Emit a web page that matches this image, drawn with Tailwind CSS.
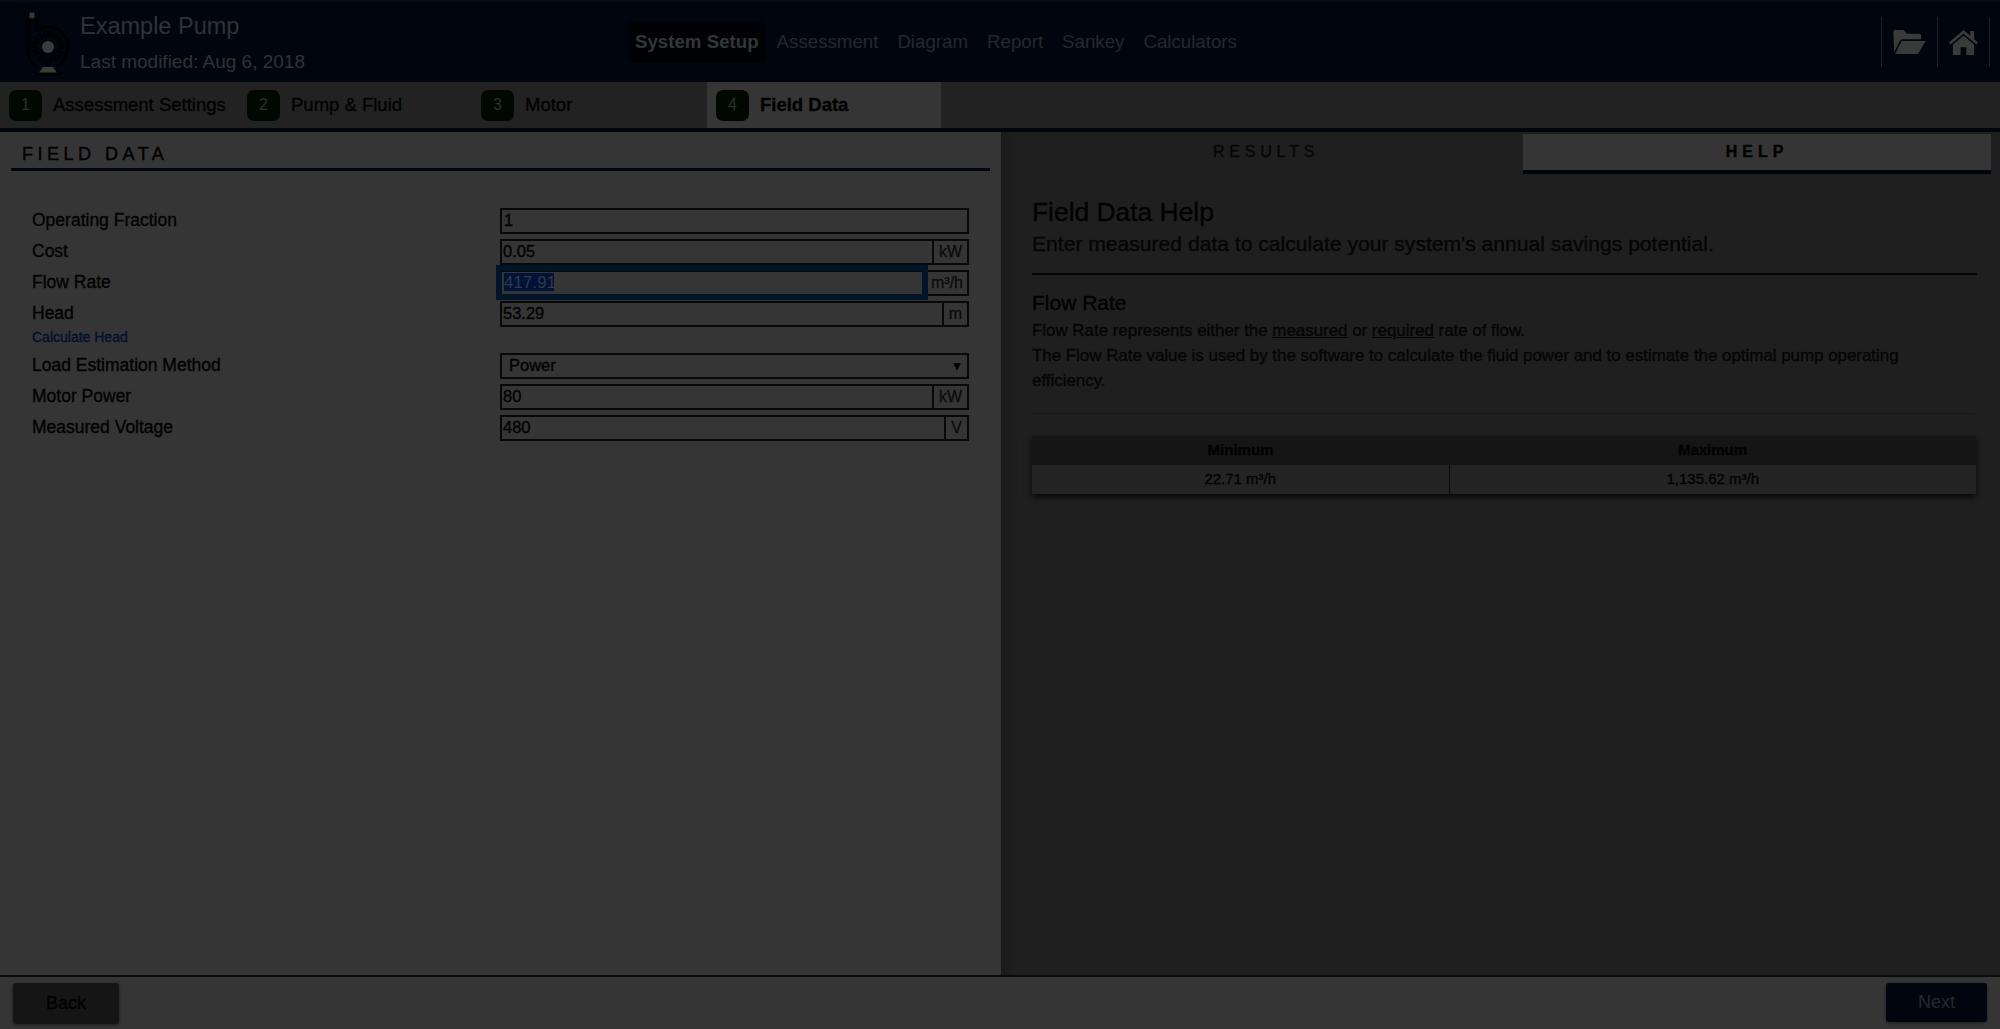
<!DOCTYPE html>
<html lang="en">
<head>
<meta charset="UTF-8">
<title>Example Pump</title>
<script src="https://cdn.jsdelivr.net/npm/@tailwindcss/browser@4"></script>
</head>
<body class="h-[1029px] w-[2000px] overflow-hidden bg-[#353535] font-['Liberation_Sans',sans-serif] text-[#020202] [-webkit-text-stroke:0.35px]">
  <!-- top nav -->
  <header class="flex h-[82px] items-center border-t-2 border-[#040c16] bg-[#01060e] [-webkit-text-stroke:0]">
    <div class="flex w-[628px] items-center">
      <svg class="ml-[20px] h-[72px] w-[50px] shrink-0" viewBox="20 4 50 72" fill="none">
        <path d="M29 10h6v7h-6z" fill="#383838" stroke="#000" stroke-width="1"/>
        <path d="M25 18h14" stroke="#000" stroke-width="3"/>
        <path d="M28 20v28c0 8 4 15 10 18M37 20v8c3-2 7-3 11-3 11 0 20 9 20 20 0 8-5 16-12 19" stroke="#000" stroke-width="2.500"/>
        <circle cx="48" cy="45" r="13" stroke="#000" stroke-width="6" stroke-dasharray="2 2"/>
        <circle cx="48" cy="45" r="6" fill="#3c3c3c"/>
        <path d="M43 65h10l4 6H39z" fill="#3c3c3c"/>
        <path d="M35 72h27" stroke="#000" stroke-width="3"/>
      </svg>
      <div class="ml-[10px]">
        <div class="text-[23.500px] leading-[26px] text-[#2f3236]">Example Pump</div>
        <div class="mt-[12px] text-[19px] leading-[21px] text-[#2f3236]">Last modified: Aug 6, 2018</div>
      </div>
    </div>
    <nav class="flex items-center text-[18.700px] text-[#24282d]">
      <span class="rounded-[5px] bg-[#000205] px-[7px] py-[9px] leading-[24px] font-bold text-[#353535]">System Setup</span>
      <span class="ml-[11px]">Assessment</span>
      <span class="ml-[19px]">Diagram</span>
      <span class="ml-[19px]">Report</span>
      <span class="ml-[19px]">Sankey</span>
      <span class="ml-[19px]">Calculators</span>
    </nav>
    <div class="ml-auto mr-[10px] flex h-[50px] items-center">
      <div class="flex h-full w-[56px] items-center justify-center border-l border-[#1e2226]">
        <svg class="h-[26px] w-[34px]" viewBox="0 0 36 28" fill="#3a3a3a"><path d="M0 3a2 2 0 0 1 2-2h9l4 4h13a2 2 0 0 1 2 2v4H10a3 3 0 0 0-3 2L1 25z"/><path d="M9 13h26l-8 13a3 3 0 0 1-2 1H2z"/></svg>
      </div>
      <div class="flex h-full w-[53px] items-center justify-center border-x border-[#1e2226]">
        <svg class="h-[25px] w-[29px]" viewBox="0 0 30 26" fill="#3a3a3a"><path d="M15 0 0 13l1.500 2L15 4l13.500 11 1.500-2-4-3.500V1h-4v5z"/><path d="M15 6 4 15v11h8v-8h6v8h8V15z"/></svg>
      </div>
    </div>
  </header>

  <!-- steps -->
  <div class="flex h-[46px] bg-[#222222] text-[18.500px]">
    <div class="flex w-[247px] items-center pl-[9px]"><span class="flex h-[31px] w-[33px] items-center justify-center rounded-[7px] bg-[#000801] text-[16px] text-[#2c302c] [-webkit-text-stroke:0]">1</span><span class="ml-[11px]">Assessment Settings</span></div>
    <div class="flex w-[234px] items-center"><span class="flex h-[31px] w-[33px] items-center justify-center rounded-[7px] bg-[#000801] text-[16px] text-[#2c302c] [-webkit-text-stroke:0]">2</span><span class="ml-[11px]">Pump &amp; Fluid</span></div>
    <div class="flex w-[226px] items-center"><span class="flex h-[31px] w-[33px] items-center justify-center rounded-[7px] bg-[#000801] text-[16px] text-[#2c302c] [-webkit-text-stroke:0]">3</span><span class="ml-[11px]">Motor</span></div>
    <div class="flex w-[234px] items-center bg-[#353535] pl-[9px] font-bold"><span class="flex h-[31px] w-[33px] items-center justify-center rounded-[7px] bg-[#000801] text-[16px] font-normal text-[#2c302c] [-webkit-text-stroke:0]">4</span><span class="ml-[11px]">Field Data</span></div>
  </div>
  <div class="h-[4px] bg-[#01060e] shadow-[0_2px_3px_rgba(0,0,0,0.4)]"></div>

  <main class="flex h-[843px]">
    <!-- left form -->
    <section class="w-[1001px] bg-[#353535] px-[11px]">
      <h2 class="h-[39px] border-b-[3px] border-[#01060e] pt-[12px] pl-[11px] text-[18px] leading-[21px] tracking-[4.500px] text-black">FIELD DATA</h2>
      <div class="mt-[37px] grid grid-cols-[468px_469px] pl-[21px] text-[17.500px]">
        <div class="flex h-[26px] items-center pb-[1px]">Operating Fraction</div>
        <div class="flex h-[26px] border-2 border-[#080808] pl-[2px] text-[16.500px] leading-[20px]">1</div>

        <div class="mt-[5px] flex h-[26px] items-center pb-[1px]">Cost</div>
        <div class="mt-[5px] flex h-[26px] border-2 border-[#080808] text-[16.500px] leading-[20px]"><span class="flex-1 pl-[1px]">0.05</span><span class="w-[35px] border-l-2 border-[#080808] text-center text-[16px] leading-[22px] text-[#0c0c0c]">kW</span></div>

        <div class="mt-[5px] flex h-[26px] items-center pb-[1px]">Flow Rate</div>
        <div class="relative mt-[5px] flex h-[26px] border-2 border-[#080808] text-[16.500px] leading-[20px]"><span class="flex-1"></span><span class="w-[42px] border-l-2 border-[#080808] text-center text-[16px] leading-[22px] whitespace-nowrap text-[#0c0c0c]">m³/h</span>
          <div class="absolute top-[-7px] left-[-6px] h-[35px] w-[432px] border-[6px] border-[#011428]"><span class="mt-[2px] ml-[2px] block w-[50px] bg-[#011238] text-[16.500px] leading-[18px] tracking-[0.3px] whitespace-nowrap text-[#2f3a48] [-webkit-text-stroke:0]">417.91</span></div>
        </div>

        <div class="mt-[5px] flex h-[26px] items-center pb-[1px]">Head</div>
        <div class="mt-[5px] flex h-[26px] border-2 border-[#080808] text-[16.500px] leading-[20px]"><span class="flex-1 pl-[1px]">53.29</span><span class="w-[25px] border-l-2 border-[#080808] text-center text-[16px] leading-[22px] text-[#0c0c0c]">m</span></div>

        <div class="col-span-2 h-[26px] pt-[1px] text-[14px] leading-[18px] text-[#011030]">Calculate Head</div>

        <div class="flex h-[26px] items-center pb-[1px]">Load Estimation Method</div>
        <div class="flex h-[26px] items-center justify-between border-2 border-[#080808] pr-[4px] pb-[1px] pl-[7px] text-[16.500px]"><span>Power</span><span class="text-[12px]">▼</span></div>

        <div class="mt-[5px] flex h-[26px] items-center pb-[1px]">Motor Power</div>
        <div class="mt-[5px] flex h-[26px] border-2 border-[#080808] text-[16.500px] leading-[20px]"><span class="flex-1 pl-[1px]">80</span><span class="w-[35px] border-l-2 border-[#080808] text-center text-[16px] leading-[22px] text-[#0c0c0c]">kW</span></div>

        <div class="mt-[5px] flex h-[26px] items-center pb-[1px]">Measured Voltage</div>
        <div class="mt-[5px] flex h-[26px] border-2 border-[#080808] text-[16.500px] leading-[20px]"><span class="flex-1 pl-[1px]">480</span><span class="w-[23px] border-l-2 border-[#080808] text-center text-[16px] leading-[22px] text-[#0c0c0c]">V</span></div>
      </div>
    </section>

    <!-- right help -->
    <section class="flex-1 bg-[#1f1f1f] shadow-[inset_14px_0_12px_-8px_rgba(0,0,0,0.2)]">
      <div class="flex h-[42px] pt-[2px]">
        <div class="flex h-[40px] w-[522px] items-center justify-center pb-[4px] pl-[8px] text-[16px] tracking-[4.800px] text-[#060606]">RESULTS</div>
        <div class="flex h-[40px] w-[468px] items-center justify-center border-b-[4px] border-[#01060e] bg-[#353535] text-[16px] font-bold tracking-[5px]">HELP</div>
      </div>
      <div class="pr-[23px] pl-[31px]">
        <h3 class="mt-[22px] text-[26.400px] leading-[32px]">Field Data Help</h3>
        <p class="text-[21.100px] leading-[32px] text-[#050505]">Enter measured data to calculate your system's annual savings potential.</p>
        <div class="mt-[13px] border-t-2 border-[#050505]"></div>
        <h4 class="mt-[15px] text-[21px] leading-[26px]">Flow Rate</h4>
        <p class="mt-[2px] text-[16.900px] leading-[25px] text-[#050505]">Flow Rate represents either the <u>measured</u> or <u>required</u> rate of flow.<br>The Flow Rate value is used by the software to calculate the fluid power and to estimate the optimal pump operating<br>efficiency.</p>
        <div class="mt-[20px] mr-[2px] border-t border-[#181818]"></div>
        <table class="mt-[22px] w-[944px] table-fixed text-center text-[15px] shadow-[0_3px_6px_rgba(0,0,0,0.8)]">
          <tr class="h-[29px] bg-[#151515] font-bold"><th class="w-[417px]">Minimum</th><th>Maximum</th></tr>
          <tr class="h-[29px] bg-[#242424]"><td class="border-r border-[#0a0a0a]">22.71 m³/h</td><td>1,135.62 m³/h</td></tr>
        </table>
      </div>
    </section>
  </main>

  <!-- footer -->
  <footer class="flex h-[54px] items-start justify-between border-t-2 border-[#0a0a0a] bg-[#353535] px-[13px] pt-[6px]">
    <button class="h-[41px] w-[106px] rounded-[3px] bg-[#151515] text-[18px] shadow-[0_1px_3px_rgba(0,0,0,0.5)]">Back</button>
    <button class="h-[39px] w-[101px] rounded-[3px] bg-[#01060e] text-[18px] text-[#24282d] shadow-[0_1px_3px_rgba(0,0,0,0.5)] [-webkit-text-stroke:0]">Next</button>
  </footer>
</body>
</html>
